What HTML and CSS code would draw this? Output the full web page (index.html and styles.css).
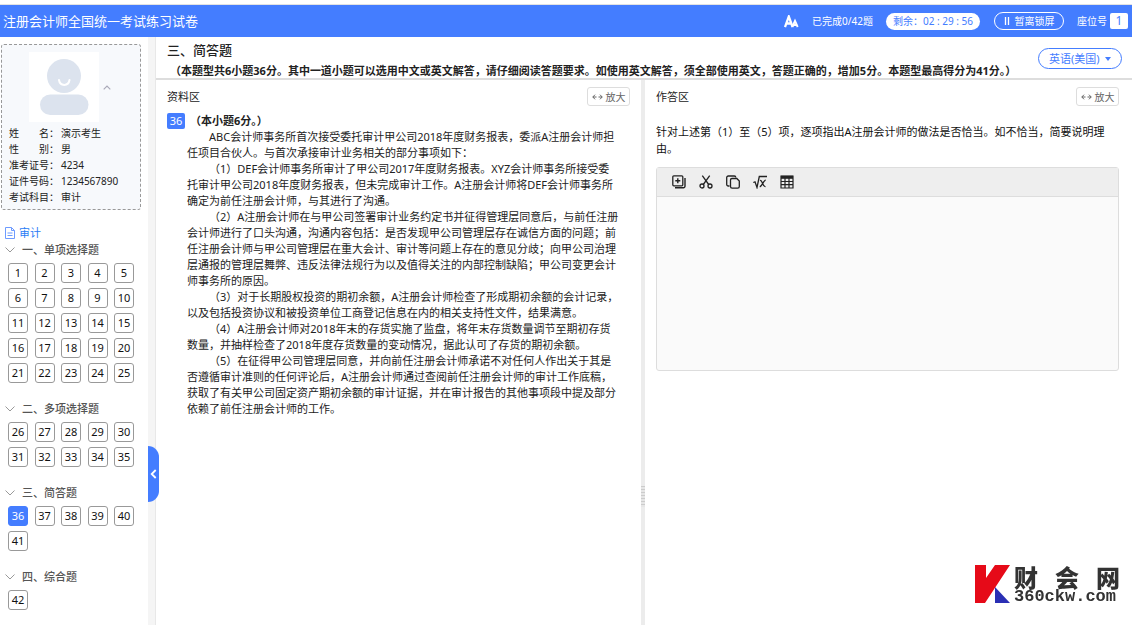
FILE: index.html
```html
<!DOCTYPE html>
<html lang="zh-CN">
<head>
<meta charset="utf-8">
<title>注册会计师全国统一考试练习试卷</title>
<link rel="stylesheet" href="styles.css">
</head>
<body>
<header class="topbar">
  <h1 class="topbar-title">注册会计师全国统一考试练习试卷</h1>
  <div class="topbar-tools">
    <button class="font-btn" type="button" aria-label="字体大小">
      <svg width="15" height="13" viewBox="0 0 15 13" fill="none" stroke="#fff"><path d="M1 12 4.800 1.500 8.600 12M2.500 8.500h4.600" stroke-width="2.300"/><path d="M8.300 12 11 5.800 13.700 12M9.300 10h3.400" stroke-width="1.900"/></svg>
    </button>
    <span class="progress">已完成0/42题</span>
    <span class="timer">剩余：02 : 29 : 56</span>
    <button class="lock-btn" type="button">
      <svg width="6" height="8" viewBox="0 0 6 8"><path d="M1.500 0v8M4.500 0v8" stroke="#fff" stroke-width="1.300"/></svg>暂离锁屏
    </button>
    <span class="seat">座位号<b class="seat-no">1</b></span>
  </div>
</header>
<div class="layout">
  <aside class="sidebar">
    <section class="card">
      <div class="card-photo">
        <svg class="avatar" width="70" height="70" viewBox="0 0 70 70"><rect width="70" height="70" fill="#fff"/><circle cx="35" cy="24" r="17" fill="#dce3ee"/><path d="M30 28c1 6.500 9.500 6.500 10.500 0" fill="none" stroke="#fff" stroke-width="2" stroke-linecap="round"/><rect x="11" y="42.500" width="48.500" height="20.500" rx="10.200" fill="#dce3ee"/></svg>
        <button class="fold-btn" type="button" aria-label="收起"><svg width="8" height="5" viewBox="0 0 8 5"><path d="M.7 4.300 4 1l3.300 3.300" fill="none" stroke="#a9a9b8" stroke-width="1.200"/></svg></button>
      </div>
      <dl class="info">
        <dt><span>姓</span><span>名：</span></dt><dd>演示考生</dd>
        <dt><span>性</span><span>别：</span></dt><dd>男</dd>
        <dt>准考证号：</dt><dd>4234</dd>
        <dt>证件号码：</dt><dd>1234567890</dd>
        <dt>考试科目：</dt><dd>审计</dd>
      </dl>
    </section>
    <a class="subject" href="#"><svg width="10" height="12" viewBox="0 0 10 12" fill="none" stroke="#6d9bff"><path d="M.5.5h6l3 3v8h-9zM6.500.5v3h3M2.500 6h5M2.500 8.500h5"/></svg>审计</a>
    <section class="group">
      <h2 class="group-title"><svg class="chev" width="10" height="6" viewBox="0 0 10 6"><path d="M.5.5 5 5 9.500.5"/></svg>一、单项选择题</h2>
      <div class="nums"><button>1</button><button>2</button><button>3</button><button>4</button><button>5</button><button>6</button><button>7</button><button>8</button><button>9</button><button>10</button><button>11</button><button>12</button><button>13</button><button>14</button><button>15</button><button>16</button><button>17</button><button>18</button><button>19</button><button>20</button><button>21</button><button>22</button><button>23</button><button>24</button><button>25</button></div>
    </section>
    <section class="group">
      <h2 class="group-title"><svg class="chev" width="10" height="6" viewBox="0 0 10 6"><path d="M.5.5 5 5 9.500.5"/></svg>二、多项选择题</h2>
      <div class="nums"><button>26</button><button>27</button><button>28</button><button>29</button><button>30</button><button>31</button><button>32</button><button>33</button><button>34</button><button>35</button></div>
    </section>
    <section class="group">
      <h2 class="group-title"><svg class="chev" width="10" height="6" viewBox="0 0 10 6"><path d="M.5.5 5 5 9.500.5"/></svg>三、简答题</h2>
      <div class="nums"><button class="current">36</button><button>37</button><button>38</button><button>39</button><button>40</button><button>41</button></div>
    </section>
    <section class="group">
      <h2 class="group-title"><svg class="chev" width="10" height="6" viewBox="0 0 10 6"><path d="M.5.5 5 5 9.500.5"/></svg>四、综合题</h2>
      <div class="nums"><button>42</button></div>
    </section>
  </aside>
  <div class="gutter">
    <button class="collapse" type="button" aria-label="收起侧栏"><svg width="7" height="10" viewBox="0 0 7 10"><path d="M5.700 1 1.700 5l4 4" fill="none" stroke="#fff" stroke-width="1.800"/></svg></button>
  </div>
  <main class="main">
    <div class="intro">
      <div class="intro-text">
        <h2 class="intro-title">三、简答题</h2>
        <p class="intro-desc">（本题型共6小题36分。其中一道小题可以选用中文或英文解答，请仔细阅读答题要求。如使用英文解答，须全部使用英文，答题正确的，增加5分。本题型最高得分为41分。）</p>
      </div>
      <div class="lang">
        <select class="lang-select" aria-label="语言"><option>英语(美国)</option></select>
        <svg class="lang-caret" width="6" height="4" viewBox="0 0 6 4"><path d="M0 0h6L3 4z" fill="#447dff"/></svg>
      </div>
    </div>
    <div class="panes">
      <section class="pane pane-left">
        <div class="pane-head"><h3>资料区</h3><button class="zoom-btn" type="button"><svg width="11" height="6" viewBox="0 0 11 6" fill="none" stroke="#666"><path d="M3 .7.8 3 3 5.300M.8 3h3.700M8 .7 10.200 3 8 5.300M10.200 3H6.500"/></svg>放大</button></div>
        <div class="question">
          <span class="q-no">36</span>
          <div class="q-body">
            <p class="q-score">（本小题6分。）</p>
            <p>ABC会计师事务所首次接受委托审计甲公司2018年度财务报表，委派A注册会计师担<br>任项目合伙人。与首次承接审计业务相关的部分事项如下：</p>
            <p>（1）DEF会计师事务所审计了甲公司2017年度财务报表。XYZ会计师事务所接受委<br>托审计甲公司2018年度财务报表，但未完成审计工作。A注册会计师将DEF会计师事务所<br>确定为前任注册会计师，与其进行了沟通。</p>
            <p>（2）A注册会计师在与甲公司签署审计业务约定书并征得管理层同意后，与前任注册<br>会计师进行了口头沟通，沟通内容包括：是否发现甲公司管理层存在诚信方面的问题；前<br>任注册会计师与甲公司管理层在重大会计、审计等问题上存在的意见分歧；向甲公司治理<br>层通报的管理层舞弊、违反法律法规行为以及值得关注的内部控制缺陷；甲公司变更会计<br>师事务所的原因。</p>
            <p>（3）对于长期股权投资的期初余额，A注册会计师检查了形成期初余额的会计记录，<br>以及包括投资协议和被投资单位工商登记信息在内的相关支持性文件，结果满意。</p>
            <p>（4）A注册会计师对2018年末的存货实施了监盘，将年末存货数量调节至期初存货<br>数量，并抽样检查了2018年度存货数量的变动情况，据此认可了存货的期初余额。</p>
            <p>（5）在征得甲公司管理层同意，并向前任注册会计师承诺不对任何人作出关于其是<br>否遵循审计准则的任何评论后，A注册会计师通过查阅前任注册会计师的审计工作底稿，<br>获取了有关甲公司固定资产期初余额的审计证据，并在审计报告的其他事项段中提及部分<br>依赖了前任注册会计师的工作。</p>
          </div>
        </div>
      </section>
      <div class="splitter"><i class="grip"></i></div>
      <section class="pane pane-right">
        <div class="pane-head"><h3>作答区</h3><button class="zoom-btn" type="button"><svg width="11" height="6" viewBox="0 0 11 6" fill="none" stroke="#666"><path d="M3 .7.8 3 3 5.300M.8 3h3.700M8 .7 10.200 3 8 5.300M10.200 3H6.500"/></svg>放大</button></div>
        <label class="ask" for="answer">针对上述第（1）至（5）项，逐项指出A注册会计师的做法是否恰当。如不恰当，简要说明理<br>由。</label>
        <div class="editor">
          <div class="toolbar">
            <button type="button" aria-label="复制添加"><svg width="14" height="14" viewBox="0 0 14 14" fill="none" stroke="#222"><rect x=".8" y=".8" width="10" height="10" rx="1" stroke-width="1.300"/><path d="M3 12.800h8.500a1.500 1.500 0 0 0 1.500-1.500V3M5.800 3.300v5M3.300 5.800h5" stroke-width="1.400"/></svg></button>
            <button type="button" aria-label="剪切"><svg width="14" height="14" viewBox="0 0 14 14" fill="none" stroke="#222" stroke-width="1.300"><path d="M3.300.7 9.700 9.500M10.700.7 4.300 9.500"/><circle cx="3" cy="11" r="2"/><circle cx="11" cy="11" r="2"/></svg></button>
            <button type="button" aria-label="粘贴"><svg width="14" height="14" viewBox="0 0 14 14" fill="none" stroke="#222" stroke-width="1.300"><path d="M3.500 11H2.300A1.600 1.600 0 0 1 .7 9.400V2.600A1.600 1.600 0 0 1 2.300 1h6a1.600 1.600 0 0 1 1.500 1.500"/><path d="M6 3.500h4.800l2.500 2.500v5.600a1.600 1.600 0 0 1-1.600 1.600H6.100a1.600 1.600 0 0 1-1.600-1.600V5A1.500 1.500 0 0 1 6 3.500z"/></svg></button>
            <button type="button" aria-label="公式"><svg width="14" height="14" viewBox="0 0 14 14" fill="none" stroke="#222" stroke-width="1.300"><path d="M.3 7.500 2 6.800 4 12.500 6.300 1.500H14M7 5.500c2.500-1 2.700 7 5.500 6M12.700 5.200C10.500 5.200 9 11.700 6.700 11.700"/></svg></button>
            <button type="button" aria-label="表格"><svg width="14" height="14" viewBox="0 0 14 14" fill="none" stroke="#222"><path d="M1 1h12v12H1zM1 6.500h12M1 9.700h12M5 3v10M9 3v10" stroke-width="1.200"/><path d="M1 2.300h12" stroke-width="3"/></svg></button>
          </div>
          <textarea class="answer" id="answer"></textarea>
        </div>
      </section>
    </div>
  </main>
</div>
<div class="brand">
  <svg width="35" height="38" viewBox="0 0 35 38"><path d="M0 0h11v13L20 0h15L10 38H0z" fill="#e60a18"/><path d="M20 22v16h15z" fill="#2a2fb4"/></svg>
  <div class="brand-text">
    <div class="brand-name"><span>财</span><span>会</span><span>网</span></div>
    <div class="brand-url">360ckw.com</div>
  </div>
</div>
</body>
</html>
```
FILE: styles.css
```css
* { box-sizing: border-box; margin: 0; padding: 0; }
body {
  min-height: 100vh;
  display: flex;
  flex-direction: column;
  padding-top: 4px;
  background: #fff;
  color: #222;
  font: 11px/16px "Noto Sans", "Noto Sans CJK SC", sans-serif;
}
button, select, textarea { font: inherit; color: inherit; background: none; border: 0; }
button { cursor: pointer; }
svg { display: block; flex: none; }

.topbar {
  height: 33px;
  flex: none;
  display: flex;
  align-items: center;
  justify-content: space-between;
  padding: 0 4px 0 3px;
  background: #447dff;
  border-top: 1px solid #e2e2e2;
  color: #fff;
}
.topbar-title { font-size: 13px; font-weight: 400; white-space: nowrap; }
.topbar-tools { display: flex; align-items: center; font-size: 10px; white-space: nowrap; }
.progress { margin: 0 13px; }
.timer { width: 94px; text-align: center; border-radius: 9px; background: #fff; color: #447dff; line-height: 17px; }
.lock-btn {
  display: flex;
  align-items: center;
  justify-content: center;
  gap: 5px;
  width: 70px;
  height: 18px;
  margin: 0 13px 0 14px;
  border: 1px solid #fff;
  border-radius: 9px;
}
.seat { display: flex; align-items: center; gap: 3px; }
.seat-no { width: 18px; text-align: center; border-radius: 2px; background: #fff; color: #447dff; font-size: 12px; font-weight: 400; }

.layout { flex: 1; display: flex; }
.sidebar { width: 148px; flex: none; padding: 7px 7px 14px 1px; }
.card { width: 140px; padding: 7px 7px 4px; border: 1px dashed #999; border-radius: 3px; background: #f7f9fc; }
.card-photo { display: flex; align-items: center; gap: 4px; padding-left: 20px; margin-bottom: 3px; }
.fold-btn { padding: 4px 0; }
.info { display: grid; grid-template-columns: 52px 1fr; font-size: 10px; }
.info dt { display: flex; justify-content: space-between; padding-right: 2px; }
.subject { display: flex; align-items: center; gap: 4px; margin-top: 15px; padding-left: 4px; height: 15px; color: #2a7cf5; text-decoration: none; }
.group { padding-left: 4px; margin-bottom: 13px; }
.group-title { display: flex; align-items: center; gap: 7px; height: 26px; font-size: 11px; font-weight: 500; color: #555; }
.chev { fill: none; stroke: #999; }
.subject + .group .group-title { height: 23px; align-items: flex-start; padding-top: 2px; }
.subject + .group .chev { margin-top: 5px; }
.nums { display: grid; grid-template-columns: repeat(5, 20px); justify-content: space-between; row-gap: 5px; width: 129px; padding-left: 3px; }
.nums button { height: 20px; border: 1px solid #999; border-radius: 3px; background: #fff; color: #111; text-align: center; line-height: 16px; }
.nums .current { border-color: #447dff; background: #447dff; color: #fff; }

.gutter { position: relative; width: 8px; flex: none; background: #f5f5f5; border-right: 1px solid #e8e8e8; }
.collapse {
  position: absolute;
  z-index: 1;
  left: 0;
  top: 409px;
  width: 11px;
  height: 56px;
  display: flex;
  align-items: center;
  justify-content: center;
  border-radius: 0 11px 11px 0;
  background: #447dff;
}

.main { flex: 1; min-width: 0; display: flex; flex-direction: column; }
.intro { display: flex; justify-content: space-between; padding: 3px 10px 0 11px; height: 43px; border-bottom: 2px solid #ddd; }
.intro-text { min-width: 0; white-space: nowrap; }
.intro-title { font-size: 13px; line-height: 20px; font-weight: 500; }
.intro-desc { padding-left: 3px; font-weight: 700; line-height: 22px; }
.lang { position: relative; margin-top: 8px; }
.lang-select { appearance: none; width: 84px; height: 21px; padding: 0 10px; border: 1px solid #447dff; border-radius: 11px; color: #447dff; }
.lang-caret { position: absolute; right: 11px; top: 9px; pointer-events: none; }

.panes { flex: 1; display: flex; }
.pane { flex: 1; min-width: 0; padding: 7px 11px; }
.pane-right { padding-right: 13px; }
.splitter { width: 4px; flex: none; display: flex; align-items: center; background: #ececec; }
.grip { width: 4px; height: 21px; margin-top: 276px; background: repeating-linear-gradient(#ccc 0 1px, #e6e6e6 1px 3px); }
.pane-head { display: flex; justify-content: space-between; align-items: center; height: 19px; }
.pane-head h3 { font-size: 11px; font-weight: 400; }
.zoom-btn { display: flex; align-items: center; justify-content: center; gap: 3px; width: 43px; height: 19px; border: 1px solid #ddd; border-radius: 3px; color: #666; font-size: 10px; }

.question { display: flex; gap: 2px; margin-top: 7px; }
.q-no { width: 18px; height: 16px; flex: none; border-radius: 2px; background: #447dff; color: #fff; text-align: center; }
.q-body { flex: 1; min-width: 0; white-space: nowrap; }
.q-body p { text-indent: 2em; }
.q-body .q-score { padding-left: 3px; text-indent: 0; font-weight: 700; }

.ask { display: block; margin-top: 17px; line-height: 17px; color: #111; }
.editor { margin-top: 10px; border: 1px solid #ddd; border-radius: 3px; background: #fafafa; }
.toolbar { display: flex; align-items: center; gap: 13px; height: 29px; padding-left: 15px; background: #eee; border-bottom: 1px solid #ddd; }
.answer { display: block; width: 100%; height: 173px; padding: 8px; resize: none; outline: 0; }

.brand { position: fixed; right: 12px; bottom: 21px; display: flex; align-items: center; gap: 4px; color: #333; }
.brand-text { width: 106px; }
.brand-name { display: flex; justify-content: space-between; font: 900 24px/26px "Noto Sans CJK SC", sans-serif; }
.brand-url { font: 700 17px/14px "Liberation Mono", monospace; }
```
